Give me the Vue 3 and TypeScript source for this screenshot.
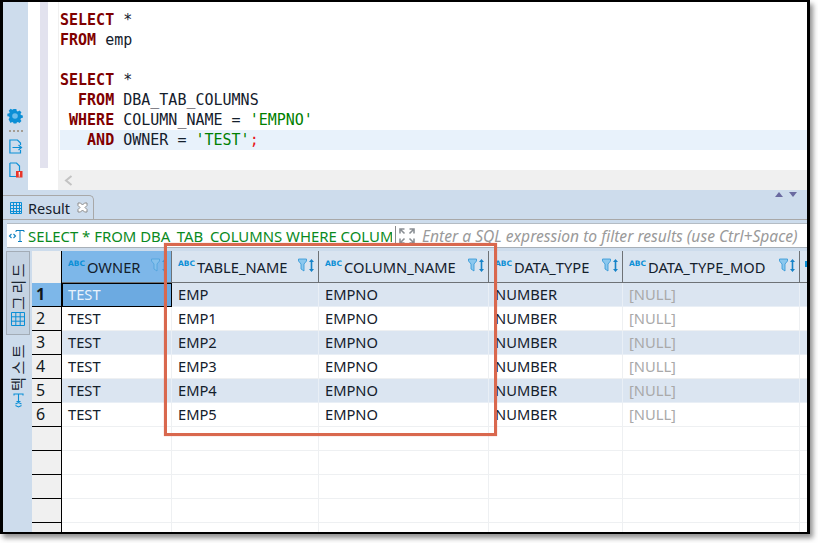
<script setup lang="ts">
interface Col { name: string; width: number; key: 'owner' | 'table' | 'column' | 'type' | 'mod' }
const cols: Col[] = [
  { name: 'OWNER', width: 110, key: 'owner' },
  { name: 'TABLE_NAME', width: 147, key: 'table' },
  { name: 'COLUMN_NAME', width: 170, key: 'column' },
  { name: 'DATA_TYPE', width: 134, key: 'type' },
  { name: 'DATA_TYPE_MOD', width: 177, key: 'mod' },
]
const rows = [
  { owner: 'TEST', table: 'EMP', column: 'EMPNO', type: 'NUMBER', mod: '[NULL]' },
  { owner: 'TEST', table: 'EMP1', column: 'EMPNO', type: 'NUMBER', mod: '[NULL]' },
  { owner: 'TEST', table: 'EMP2', column: 'EMPNO', type: 'NUMBER', mod: '[NULL]' },
  { owner: 'TEST', table: 'EMP3', column: 'EMPNO', type: 'NUMBER', mod: '[NULL]' },
  { owner: 'TEST', table: 'EMP4', column: 'EMPNO', type: 'NUMBER', mod: '[NULL]' },
  { owner: 'TEST', table: 'EMP5', column: 'EMPNO', type: 'NUMBER', mod: '[NULL]' },
]
const emptyRows = [1, 2, 3, 4, 5]
</script>

<template>
  <div class="page">
    <div class="frame">
      <section class="editor">
        <div class="ruler">
          <svg class="gear" width="16" height="16" viewBox="0 0 16 16">
            <path fill="#0b8fd6" fill-rule="evenodd" d="M6.400.5h3.200l.5 2.200 1.300.6 1.900-1.200 2.300 2.300-1.200 1.900.6 1.300 2.200.5v2.800l-2.200.5-.6 1.300 1.200 1.900-2.300 2.300-1.900-1.200-1.300.6-.5 1.200H6.400l-.5-1.200-1.300-.6-1.900 1.200L.4 12.600l1.200-1.900-.6-1.300L-1 8.900V6.100l2.200-.5.600-1.300L.6 2.400 2.900.1l1.900 1.200 1.100-.6z" transform="translate(1.200 .6) scale(.85)"/>
            <circle cx="8" cy="8" r="2.800" fill="#6cbdec"/>
          </svg>
          <div class="dots"><i></i><i></i><i></i><i></i></div>
          <svg class="doc" width="14" height="15" viewBox="0 0 14 15" fill="none">
            <path d="M11.500 6V4L8.500 1H.9v13h10.600v-3" stroke="#0b8fd6" stroke-width="1.200"/>
            <path d="M3.500 8.500H12M9.500 6l3 2.500-3 2.500" stroke="#0b8fd6" stroke-width="1.200"/>
          </svg>
          <svg class="doc2" width="14" height="16" viewBox="0 0 14 16" fill="none">
            <path d="M.9 1h6.600l3 3v5M7 14.500H.9V1" stroke="#0b8fd6" stroke-width="1.200"/>
            <rect x="7" y="9" width="6.500" height="6.500" fill="#e8362a"/>
            <rect x="9.700" y="10" width="1.200" height="2.800" fill="#fff"/>
            <rect x="9.700" y="13.300" width="1.200" height="1.200" fill="#fff"/>
          </svg>
        </div>
        <div class="gutter"><div class="annot"></div></div>
        <div class="code-wrap">
          <div class="code">
            <div class="line"><b>SELECT</b> *</div>
            <div class="line"><b>FROM</b> emp</div>
            <div class="line">&nbsp;</div>
            <div class="line"><b>SELECT</b> *</div>
            <div class="line">&nbsp;&nbsp;<b>FROM</b> DBA_TAB_COLUMNS</div>
            <div class="line">&nbsp;<b>WHERE</b> COLUMN_NAME = <span class="str">'EMPNO'</span></div>
            <div class="line current">&nbsp;&nbsp;&nbsp;<b>AND</b> OWNER = <span class="str">'TEST'</span><span class="semi">;</span></div>
          </div>
          <div class="hscroll">
            <svg width="9" height="11" viewBox="0 0 9 11" fill="none"><path d="M7.500 1 2 5.500l5.500 4.500" stroke="#c3c3c3" stroke-width="2"/></svg>
          </div>
        </div>
      </section>

      <section class="results">
        <div class="tabbar">
          <div class="tab">
            <svg width="12" height="12" viewBox="0 0 12 12" fill="none" stroke="#0b8fd6">
              <path d="M.5.5h11v11H.5zM.5 3.500h11M.5 6.500h11M.5 9.500h11M3.500.5v11M6.500.5v11M9.500.5v11"/>
            </svg>
            <span class="tab-label">Result</span>
            <svg class="tab-close" width="11" height="11" viewBox="0 0 11 11">
              <path d="M1 1h2.500L5.500 3l2-2H10v2.500L8 5.500l2 2V10H7.500l-2-2-2 2H1V7.500l2-2-2-2z" fill="#fff" stroke="#8c8c8c"/>
            </svg>
          </div>
          <div class="min-max">
            <span class="up"></span><span class="down"></span>
          </div>
        </div>

        <div class="filter">
          <svg class="filter-icon" width="18" height="14" viewBox="0 0 18 14" fill="none" stroke="#0b7fc0">
            <path d="M4.500 5 2.500 7l2 2M6.500 5l2 2-2 2" stroke-width="1.100"/>
            <path d="M9 3V1.500h8V3M13 1.500V12M11 12.500h4" stroke-width="1"/>
          </svg>
          <div class="filter-sql">SELECT * FROM DBA_TAB_COLUMNS WHERE COLUM</div>
          <div class="filter-sep"></div>
          <svg class="expand" width="16" height="16" viewBox="0 0 16 16" fill="none" stroke="#8a8f94" stroke-width="1.600">
            <path d="M1 5.500V1h4.500M1 1l4.500 4.500M15 5.500V1h-4.500M15 1l-4.500 4.500M1 10.500V15h4.500M1 15l4.500-4.500M15 10.500V15h-4.500M15 15l-4.500-4.500"/>
          </svg>
          <div class="filter-hint">Enter a SQL expression to filter results (use Ctrl+Space)</div>
        </div>

        <div class="body">
          <aside class="side">
            <div class="side-btn active">
              <span class="vtext">그리드</span>
              <svg width="14" height="14" viewBox="0 0 14 14" fill="none" stroke="#0b8fd6">
                <path d="M.5.500h13v13H.5zM.5 4.800h13M.5 9.200h13M4.800.5v13M9.200.5v13"/>
              </svg>
            </div>
            <div class="side-btn">
              <span class="vtext">텍스트</span>
              <svg width="11" height="15" viewBox="0 0 11 15" fill="none" stroke="#0b8fd6" stroke-width="1.100">
                <path d="M1 2.500V1h9v1.500M5.500 1v7M3.500 8.500h4M2.500 11l3-1.500 3 1.500M2.500 12.500l3 1.500 3-1.500"/>
              </svg>
            </div>
          </aside>

          <div class="grid">
            <div class="row head">
              <div class="num corner"></div>
              <div
                v-for="(c, i) in cols"
                :key="c.key"
                class="hcell"
                :class="{ selected: i === 0 }"
                :style="{ width: c.width + 'px' }"
              >
                <span class="abc">ABC</span>
                <span class="hname">{{ c.name }}</span>
                <svg class="hicons" :class="{ faded: i === 0 }" width="17" height="15" viewBox="0 0 17 15">
                  <path d="M.5 1h8v2L6 6v7l-3-2V6L.5 3z" fill="#8cc8ee" stroke="#2e96d6" stroke-width=".8"/>
                  <path d="M13.500 1l2.500 3h-1.700v7H16l-2.500 3-2.500-3h1.700V4H11z" fill="#1683c8"/>
                </svg>
              </div>
              <div class="hcell last"><span class="abc-stub"></span></div>
            </div>

            <div
              v-for="(r, ri) in rows"
              :key="ri"
              class="row data"
              :class="{ odd: ri % 2 === 0 }"
            >
              <div class="num" :class="{ 'num-sel': ri === 0 }">{{ ri + 1 }}</div>
              <div
                v-for="(c, ci) in cols"
                :key="c.key"
                class="cell"
                :class="{ sel: ri === 0 && ci === 0, nul: c.key === 'mod' }"
                :style="{ width: c.width + 'px' }"
              >{{ r[c.key] }}</div>
              <div class="cell last"></div>
            </div>

            <div v-for="e in emptyRows" :key="'e' + e" class="row data empty">
              <div class="num"></div>
              <div
                v-for="c in cols"
                :key="c.key"
                class="cell"
                :style="{ width: c.width + 'px' }"
              ></div>
              <div class="cell last"></div>
            </div>
          </div>
        </div>
      </section>

      <div class="highlight"></div>
    </div>
  </div>
</template>

<style>
html, body { margin: 0; background: #fff; }
</style>

<style scoped>
.page {
  width: 818px;
  height: 543px;
  overflow: hidden;
  background: #fff;
  font-family: "Noto Sans", "Open Sans", sans-serif;
}
.frame {
  position: relative;
  width: 804px;
  height: 530px;
  border-style: solid;
  border-color: #000;
  border-width: 2px 3px 2px 3px;
  box-shadow: 3px 4px 5px rgba(70, 70, 70, .6);
  display: flex;
  flex-direction: column;
  overflow: visible;
  background: #fff;
}
.editor {
  display: flex;
  height: 188px;
  flex: none;
  overflow: hidden;
}
.ruler {
  width: 25px;
  flex: none;
  background: #cddcec;
  display: flex;
  flex-direction: column;
  align-items: center;
  padding-top: 106px;
  box-sizing: border-box;
}
.gear { margin-right: 2px; }
.dots { display: flex; gap: 2px; margin-top: 6px; height: 2px; }
.dots i { width: 2px; height: 2px; background: #a49d93; }
.doc { margin-top: 7px; margin-left: 1px; }
.doc2 { margin-top: 8px; margin-left: 1px; }
.gutter {
  width: 30px;
  flex: none;
  background: #fff;
  padding-left: 12px;
  box-sizing: border-box;
}
.annot {
  width: 8px;
  height: 166px;
  background: #e2e2ee;
}
.code-wrap {
  flex: 1;
  min-width: 0;
  display: flex;
  flex-direction: column;
  border-left: 1px solid #f0f0f0;
}
.code {
  height: 168px;
  box-sizing: border-box;
  padding: 8px 0 0 1px;
  font: 15px/20px "DejaVu Sans Mono", monospace;
  color: #14202c;
  white-space: pre;
}
.code b { color: #7f0000; font-weight: 700; }
.str { color: #008000; }
.semi { color: #e8141a; }
.line { height: 20px; }
.current { background: #e8f2fb; }
.hscroll {
  height: 20px;
  background: #f0f0f0;
  display: flex;
  align-items: center;
  padding-left: 5px;
}
.results {
  flex: 1;
  min-height: 0;
  background: #cddcec;
  display: flex;
  flex-direction: column;
}
.tabbar {
  height: 30px;
  flex: none;
  box-sizing: border-box;
  border-bottom: 1px solid #a8a8a8;
  position: relative;
  padding-top: 5px;
}
.tab {
  width: 91px;
  height: 24px;
  box-sizing: border-box;
  border: 1px solid #a8a8a8;
  border-bottom: 0;
  border-left: 0;
  border-radius: 0 5px 0 0;
  background: #cddcec;
  display: flex;
  align-items: center;
  padding-left: 7px;
}
.tab-label { font-size: 14.500px; color: #15202b; margin-left: 6px; width: 49px; }
.min-max {
  position: absolute;
  right: 10px;
  top: 2px;
  display: flex;
  gap: 6px;
}
.up, .down { width: 0; height: 0; border-left: 4px solid transparent; border-right: 4px solid transparent; }
.up { border-bottom: 5px solid #6a6aa0; }
.down { border-top: 5px solid #6a6aa0; }
.filter {
  margin: 3px 0 0 4px;
  height: 25px;
  flex: none;
  box-sizing: border-box;
  background: #fff;
  border-top: 1px solid #b4bcc4;
  border-bottom: 1px solid #a8b0b8;
  display: flex;
  align-items: center;
  overflow: hidden;
}
.filter-icon { flex: none; margin: 0 3px 0 0; width: 18px; }
.filter-sql {
  width: 364px;
  flex: none;
  overflow: hidden;
  white-space: nowrap;
  color: #0a8a1e;
  font-size: 14.900px;
  padding-top: 1px;
}
.filter-sep { width: 1px; height: 19px; background: #8a8a8a; margin-left: 3px; flex: none; }
.expand { flex: none; margin-left: 3px; }
.filter-hint {
  margin-left: 7px;
  white-space: nowrap;
  font-style: italic;
  font-size: 15.600px;
  color: #9a9a9a;
}
.body {
  flex: 1;
  min-height: 0;
  display: flex;
  margin-top: 3px;
  overflow: hidden;
}
.side {
  width: 29px;
  flex: none;
  padding: 0 2px 0 3px;
  box-sizing: border-box;
  display: flex;
  flex-direction: column;
}
.side-btn {
  width: 24px;
  display: flex;
  flex-direction: column;
  align-items: center;
  box-sizing: border-box;
  padding: 9px 0 5px;
  gap: 2px;
  border: 1px solid transparent;
}
.side-btn.active {
  height: 84px;
  background: #c5d3e2;
  border-color: #a3acb6;
}
.side-btn + .side-btn { padding-top: 6px; }
.vtext {
  writing-mode: vertical-rl;
  text-orientation: sideways;
  transform: rotate(180deg);
  font-family: "Noto Sans CJK KR", sans-serif;
  font-size: 15px;
  letter-spacing: 2.500px;
  line-height: 16px;
  color: #1c2733;
}
.grid {
  flex: 1;
  min-width: 0;
  background: #fff;
  overflow: hidden;
}
.row { display: flex; height: 24px; }
.head { height: 32px; }
.num {
  width: 30px;
  flex: none;
  box-sizing: border-box;
  background: #f0f0f0;
  border-right: 1px solid #000;
  border-bottom: 1px solid #000;
  padding-left: 4px;
  font-size: 16px;
  line-height: 23px;
  color: #101820;
}
.corner { border-bottom: 0; }
.num-sel { background: #7db7e9; font-weight: 700; }
.hcell {
  flex: none;
  box-sizing: border-box;
  position: relative;
  display: flex;
  align-items: center;
  background: #d9e4f0;
  border-right: 1px solid #6e7276;
  border-bottom: 1px solid #6e7276;
  padding-left: 6px;
  overflow: hidden;
}
.hcell.selected { background: #7db7e9; }
.hcell.last { flex: 1; border-right: 0; }
.abc {
  color: #0b8fd6;
  font: 700 7.500px/10px "DejaVu Sans", sans-serif;
  margin-top: -6px;
  width: 19px;
  flex: none;
}
.abc-stub { width: 3px; height: 6px; background: #0b8fd6; margin: -6px 0 0 -1px; }
.hname { font-size: 14.700px; color: #14202c; white-space: nowrap; }
.hicons { position: absolute; right: 3px; top: 7px; }
.hicons.faded { opacity: .6; }
.cell {
  flex: none;
  box-sizing: border-box;
  border-right: 1px solid #eef0f2;
  border-bottom: 1px solid #eef0f2;
  padding-left: 6px;
  font-size: 14.700px;
  line-height: 23px;
  color: #14202c;
  white-space: nowrap;
}
.cell.last { flex: 1; border-right: 0; }
.odd .cell { background: #dbe5f1; border-color: #e9eff6; }
.cell.nul { color: #a9a9a9; }
.odd .cell.sel {
  background: #6caae1;
  color: #e8f2fc;
  border: 1px solid #000;
  padding-left: 5px;
  line-height: 21px;
}
.highlight {
  position: absolute;
  left: 161px;
  top: 241px;
  width: 333px;
  height: 193px;
  box-sizing: border-box;
  border: 3px solid #d9684e;
  box-shadow: 0 0 1px rgba(217, 104, 78, .6);
  pointer-events: none;
}
</style>
